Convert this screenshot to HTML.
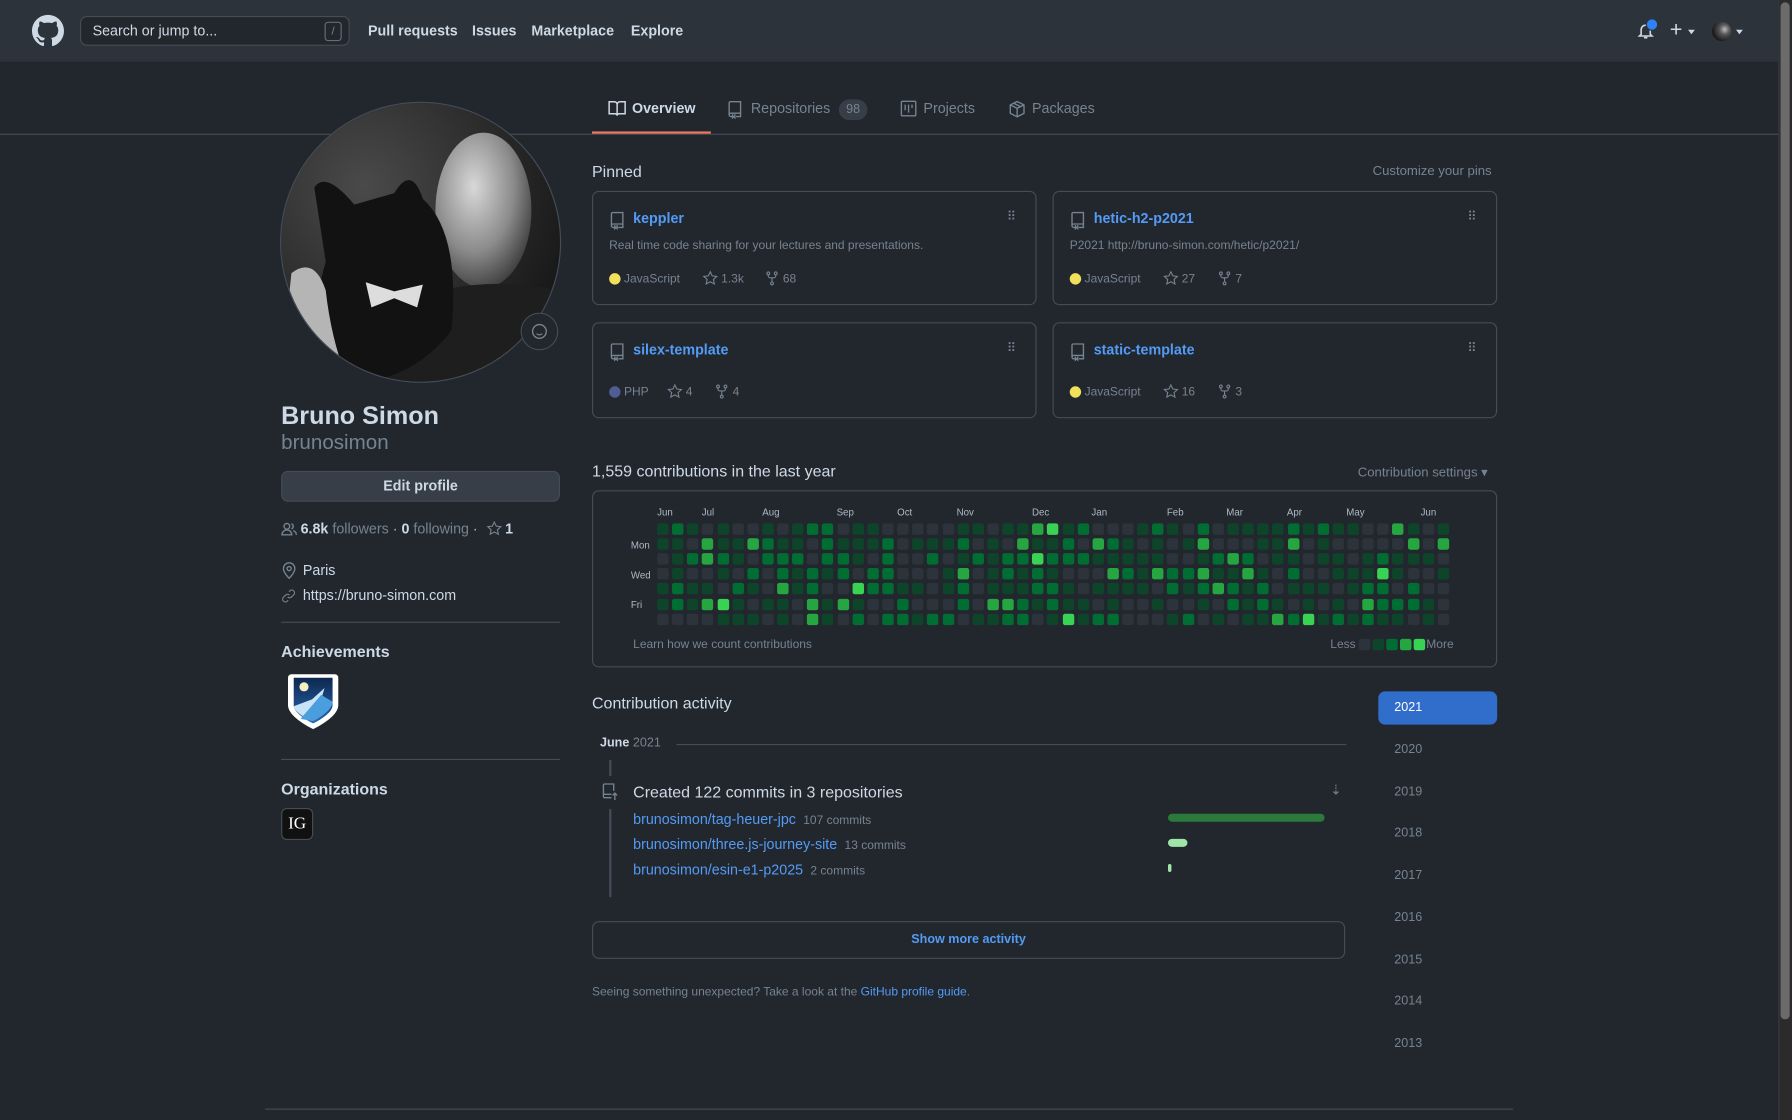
<!DOCTYPE html>
<html><head><meta charset="utf-8">
<style>
html,body{margin:0;padding:0;background:#22272e;width:1792px;height:1120px;overflow:hidden}
#w{position:absolute;left:0;top:0;width:1568px;height:980px;transform:scale(1.142857);transform-origin:0 0;font-family:"Liberation Sans",sans-serif;color:#adbac7;background:#22272e}
.a{position:absolute;white-space:nowrap}
.hdr{position:absolute;left:0;top:0;width:1556px;height:54px;background:#2d333b}
.nav{font-size:12.5px;font-weight:bold;color:#cdd9e5;top:20px}
.card{position:absolute;border:1px solid #444c56;border-radius:6px;box-sizing:border-box}
.link{color:#539bf5}
.muted{color:#768390}
.hr{position:absolute;height:1px;background:#444c56}
svg{position:absolute;overflow:visible}
.ico{fill:none;stroke:#768390;stroke-width:1.2}
</style></head><body><div id="w">
<div class="hdr"></div>
<svg style="left:28px;top:13px" width="28" height="28" viewBox="0 0 16 16"><path fill="#cdd9e5" d="M8 0C3.58 0 0 3.58 0 8c0 3.54 2.290 6.53 5.47 7.59.4.07.55-.17.55-.38 0-.19-.01-.82-.01-1.49-2.01.37-2.53-.49-2.690-.94-.09-.23-.48-.94-.82-1.130-.28-.15-.68-.52-.01-.53.63-.01 1.080.58 1.230.82.72 1.210 1.870.87 2.330.66.07-.52.28-.87.51-1.070-1.780-.2-3.640-.89-3.640-3.950 0-.87.31-1.590.82-2.150-.08-.2-.36-1.020.08-2.120 0 0 .67-.21 2.2.82.64-.18 1.320-.27 2-.27.68 0 1.360.09 2 .27 1.530-1.040 2.2-.82 2.2-.82.44 1.1.16 1.920.08 2.120.51.56.82 1.270.82 2.150 0 3.070-1.870 3.750-3.650 3.950.29.25.54.73.54 1.480 0 1.070-.01 1.930-.01 2.2 0 .21.15.46.55.38A8.013 8.013 0 0016 8c0-4.42-3.58-8-8-8z"/></svg>
<div class="a" style="left:70px;top:14px;width:236px;height:26px;border:1px solid #444c56;border-radius:6px;background:#22272e;box-sizing:border-box"></div>
<div class="a" style="left:81px;top:20px;font-size:12.5px;color:#cdd9e5">Search or jump to...</div>
<div class="a" style="left:284px;top:19px;width:15px;height:17px;border:1px solid #636e7b;border-radius:3px;box-sizing:border-box;font-size:10px;color:#768390;text-align:center;line-height:15px">/</div>
<div class="a nav" style="left:322px">Pull requests</div>
<div class="a nav" style="left:413px">Issues</div>
<div class="a nav" style="left:465px">Marketplace</div>
<div class="a nav" style="left:552px">Explore</div>
<svg style="left:1433px;top:19px" width="14" height="16" viewBox="0 0 14 16"><path d="M3 11V7a4 4 0 018 0v4l1.5 1.5h-11z M5.5 14h3" fill="none" stroke="#cdd9e5" stroke-width="1.4"/></svg>
<div class="a" style="left:1440px;top:16px;width:9px;height:9px;border-radius:50%;background:#2f81f7;border:1px solid #2d333b"></div>
<div class="a" style="left:1461px;top:16px;font-size:19px;color:#cdd9e5">+</div>
<div class="a" style="left:1477px;top:26px;border:3.5px solid transparent;border-top:4px solid #cdd9e5"></div>
<div class="a" style="left:1498px;top:19px;width:17px;height:17px;border-radius:50%;background:radial-gradient(circle at 65% 40%,#bbb 0,#555 30%,#1a1a1a 70%)"></div>
<div class="a" style="left:1519px;top:26px;border:3.5px solid transparent;border-top:4px solid #cdd9e5"></div>
<div class="a" style="left:1556px;top:0;width:12px;height:980px;background:#2b2b2b;border-left:1px solid #3a3a3a"></div>
<div class="a" style="left:1558px;top:2px;width:8px;height:890px;background:#6b6b6b;border-radius:4px"></div>
<div class="hr" style="left:0;top:117px;width:1556px"></div>
<svg style="left:532px;top:88px" width="16" height="14" viewBox="0 0 16 14"><path d="M1 1h4.5A2.5 2.5 0 018 3.5V13a2 2 0 00-2-1.5H1zM15 1h-4.5A2.5 2.5 0 008 3.5V13a2 2 0 012-1.5h5z" fill="none" stroke="#cdd9e5" stroke-width="1.3"/></svg>
<div class="a" style="left:553px;top:88px;font-size:12.5px;font-weight:bold;color:#cdd9e5">Overview</div>
<div class="a" style="left:518px;top:115px;width:104px;height:2px;background:#ec775c"></div>
<svg style="left:637px;top:88px" width="12" height="15" viewBox="0 0 12 15"><path class="ico" d="M2 1h9v10H2.5A1.5 1.5 0 001 12.5V2a1 1 0 011-1zM1 12.5A1.5 1.5 0 002.5 14H4M7 14h4v-3M4 12v3l1-1 1 1v-3"/></svg>
<div class="a muted" style="left:657px;top:88px;font-size:12.5px">Repositories</div>
<div class="a" style="left:734px;top:87px;width:25px;height:18px;border-radius:9px;background:#373e47;font-size:11px;text-align:center;line-height:18px;color:#768390">98</div>
<svg style="left:788px;top:88px" width="14" height="14" viewBox="0 0 14 14"><path class="ico" d="M1.5.7h11a.8.8 0 01.8.8v11a.8.8 0 01-.8.8h-11a.8.8 0 01-.8-.8v-11a.8.8 0 01.8-.8zM4 3.5v5M7 3.5v7M10 3.5v3"/></svg>
<div class="a muted" style="left:808px;top:88px;font-size:12.5px">Projects</div>
<svg style="left:883px;top:88px" width="14" height="15" viewBox="0 0 14 15"><path class="ico" d="M7 .8l6 3v7.4l-6 3-6-3V3.8zM1 3.8l6 3 6-3M7 6.8v7.4M4 2.3l6 3"/></svg>
<div class="a muted" style="left:903px;top:88px;font-size:12.5px">Packages</div>
<svg style="left:245px;top:89px" width="246" height="246" viewBox="0 0 246 246">
<defs><clipPath id="c"><circle cx="123" cy="123" r="122"/></clipPath>
<radialGradient id="bg" cx="30%" cy="30%" r="80%"><stop offset="0" stop-color="#4a4a4a"/><stop offset="1" stop-color="#161616"/></radialGradient>
<radialGradient id="hd" cx="40%" cy="35%" r="70%"><stop offset="0" stop-color="#d8d8d8"/><stop offset=".6" stop-color="#8a8a8a"/><stop offset="1" stop-color="#3a3a3a"/></radialGradient></defs>
<g clip-path="url(#c)">
<rect width="246" height="246" fill="url(#bg)"/>
<ellipse cx="178" cy="95" rx="42" ry="68" fill="url(#hd)"/>
<path d="M110 175 Q170 150 246 165 V246 H80z" fill="#1e1e1e"/>
<path d="M30 75 Q40 60 65 90 L100 80 Q115 55 125 85 Q158 115 150 200 Q120 240 70 246 L40 246 Q25 190 40 140z" fill="#121212"/>
<path d="M75 158 l25 8 l25 -6 l-5 20 l-20 -8 l-20 8z" fill="#ddd"/>
<path d="M10 150 Q30 135 40 165 Q45 210 60 246 H0z" fill="#b5b5b5"/>
</g>
<circle cx="123" cy="123" r="122.5" fill="none" stroke="#444c56" stroke-width="1"/>
<circle cx="227" cy="201" r="16" fill="#22272e" stroke="#444c56"/>
<circle cx="227" cy="201" r="6" fill="none" stroke="#768390" stroke-width="1.2"/>
<path d="M224.5 203q2.5 2 5 0" fill="none" stroke="#768390" stroke-width="1"/>
</svg>
<div class="a" style="left:246px;top:351px;font-size:22px;font-weight:bold;color:#cdd9e5">Bruno Simon</div>
<div class="a muted" style="left:246px;top:377px;font-size:18px">brunosimon</div>
<div class="a" style="left:246px;top:412px;width:244px;height:27px;border:1px solid #444c56;border-radius:6px;background:#373e47;box-sizing:border-box;text-align:center;line-height:25px;font-size:12.5px;font-weight:bold;color:#cdd9e5">Edit profile</div>
<svg style="left:246px;top:457px" width="14" height="12" viewBox="0 0 14 12"><path class="ico" d="M5 6a2.5 2.5 0 100-5 2.5 2.5 0 000 5zM.7 11a4.3 4.3 0 018.6 0zM9 1.3a2.4 2.4 0 010 4.5M10.5 7.3A4 4 0 0113.3 11"/></svg>
<div class="a" style="left:263px;top:456px;font-size:12.5px"><b style="color:#cdd9e5">6.8k</b> <span class="muted">followers</span> · <b style="color:#cdd9e5">0</b> <span class="muted">following</span> · </div>
<svg style="left:426px;top:456px" width="13" height="13" viewBox="0 0 16 16"><path class="ico" stroke-width="1.4" d="M8 1l2.1 4.4 4.9.6-3.6 3.3 1 4.8L8 11.7 3.6 14.1l1-4.8L1 6l4.9-.6z"/></svg>
<div class="a" style="left:442px;top:456px;font-size:12.5px;font-weight:bold;color:#cdd9e5">1</div>
<svg style="left:247px;top:492px" width="12" height="15" viewBox="0 0 12 15"><path class="ico" d="M6 14S1 9 1 5.5a5 5 0 0110 0C11 9 6 14 6 14z"/><circle class="ico" cx="6" cy="5.5" r="1.8"/></svg>
<div class="a" style="left:265px;top:492px;font-size:12.5px;color:#cdd9e5">Paris</div>
<svg style="left:246px;top:515px" width="13" height="13" viewBox="0 0 16 16"><path class="ico" stroke-width="1.5" d="M7 9a3 3 0 004.2 0l2.6-2.6a3 3 0 00-4.2-4.2L8.4 3.4M9 7a3 3 0 00-4.2 0L2.2 9.6a3 3 0 004.2 4.2l1.2-1.2"/></svg>
<div class="a" style="left:265px;top:514px;font-size:12.5px;color:#cdd9e5">https://bruno-simon.com</div>
<div class="hr" style="left:246px;top:544px;width:244px"></div>
<div class="a" style="left:246px;top:562px;font-size:14px;font-weight:bold;color:#cdd9e5">Achievements</div>
<svg style="left:251px;top:588px" width="46" height="52" viewBox="0 0 46 52">
<defs><linearGradient id="sk" x1="0" y1="0" x2="0" y2="1"><stop offset="0" stop-color="#0d2850"/><stop offset="1" stop-color="#2a66b0"/></linearGradient></defs>
<path d="M4 2h38a3 3 0 013 3v24c0 8-12 16-22 21C13 45 1 37 1 29V5a3 3 0 013-3z" fill="#fff"/>
<path d="M6 5h34v24c0 6-9 12-17 16C15 41 6 35 6 29z" fill="url(#sk)"/>
<path d="M6 30L22 24 33 14 30 24 23 43C15 40 7 35 6 30z" fill="#c8e3f7"/>
<path d="M12 41L30 20 40 26c0 6-9 13-17 17z" fill="#4b9ede"/>
<circle cx="15" cy="13" r="4" fill="#f4eec0"/>
</svg>
<div class="hr" style="left:246px;top:664px;width:244px"></div>
<div class="a" style="left:246px;top:682px;font-size:14px;font-weight:bold;color:#cdd9e5">Organizations</div>
<div class="a" style="left:246px;top:707px;width:28px;height:28px;background:#111;border:1px solid #444c56;border-radius:5px;box-sizing:border-box;font-family:'Liberation Serif',serif;color:#fff;font-size:15px;text-align:center;line-height:26px">IG</div>
<div class="a" style="left:518px;top:142px;font-size:14px;color:#cdd9e5">Pinned</div>
<div class="a muted" style="left:1201px;top:144px;font-size:11.5px">Customize your pins</div>
<div id="cards"></div>
<div class="a" style="left:518px;top:404px;font-size:14px;color:#cdd9e5">1,559 contributions in the last year</div>
<div class="a muted" style="left:1188px;top:406px;font-size:11.5px">Contribution settings ▾</div>
<div class="card" style="left:518px;top:429px;width:792px;height:155px"></div>
<div id="cal"></div>
<div class="a muted" style="left:554px;top:558px;font-size:10.5px">Learn how we count contributions</div>
<div class="a muted" style="left:1164px;top:558px;font-size:10.5px">Less</div>
<div class="a muted" style="left:1248px;top:558px;font-size:10.5px">More</div>
<div class="a" style="left:518px;top:607px;font-size:14px;color:#cdd9e5">Contribution activity</div>
<div class="a" style="left:1206px;top:605px;width:104px;height:29px;background:#316dca;border-radius:6px;box-sizing:border-box;padding-left:14px;line-height:29px;font-size:11px;color:#fff">2021</div>
<div id="yrs"></div>
<div class="a" style="left:525px;top:644px;font-size:11px"><b style="color:#cdd9e5">June</b> <span class="muted">2021</span></div>
<div class="hr" style="left:592px;top:651px;width:586px"></div>
<div class="a" style="left:533px;top:665px;width:2px;height:14px;background:#444c56"></div>
<div class="a" style="left:533px;top:708px;width:2px;height:77px;background:#444c56"></div>
<svg style="left:527px;top:685px" width="14" height="16" viewBox="0 0 14 16"><path class="ico" d="M8 13H2a1 1 0 01-1-1V2a1 1 0 011-1h8v6M1 10h7M11 15V9M9 11l2-2 2 2"/></svg>
<div class="a" style="left:554px;top:685px;font-size:14px;color:#cdd9e5">Created 122 commits in 3 repositories</div>
<div class="a muted" style="left:1164px;top:684px;font-size:12px">⇣</div>
<div class="a" style="left:554px;top:710px;font-size:12.5px"><span class="link">brunosimon/tag-heuer-jpc</span> <span class="muted" style="font-size:10.5px">&nbsp;107 commits</span></div>
<div class="a" style="left:554px;top:732px;font-size:12.5px"><span class="link">brunosimon/three.js-journey-site</span> <span class="muted" style="font-size:10.5px">&nbsp;13 commits</span></div>
<div class="a" style="left:554px;top:754px;font-size:12.5px"><span class="link">brunosimon/esin-e1-p2025</span> <span class="muted" style="font-size:10.5px">&nbsp;2 commits</span></div>
<div class="a" style="left:1022px;top:712px;width:137px;height:7px;border-radius:4px;background:#2b7a3b"></div>
<div class="a" style="left:1022px;top:734px;width:17px;height:7px;border-radius:4px;background:#a0e5a8"></div>
<div class="a" style="left:1022px;top:756px;width:3px;height:7px;border-radius:2px;background:#a0e5a8"></div>
<div class="a" style="left:518px;top:806px;width:659px;height:33px;border:1px solid #444c56;border-radius:6px;box-sizing:border-box;text-align:center;line-height:31px;font-size:11px;font-weight:bold;color:#539bf5">Show more activity</div>
<div class="a muted" style="left:518px;top:862px;font-size:10.5px">Seeing something unexpected? Take a look at the <span class="link">GitHub profile guide</span>.</div>
<div class="hr" style="left:232px;top:970px;width:1092px"></div>
</div>
<script>
var cards=[[518,167,100,'keppler','Real time code sharing for your lectures and presentations.','#f1e05a','JavaScript','1.3k','68'],
[921,167,100,'hetic-h2-p2021','P2021 http://bruno-simon.com/hetic/p2021/','#f1e05a','JavaScript','27','7'],
[518,282,84,'silex-template','','#4F5D95','PHP','4','4'],
[921,282,84,'static-template','','#f1e05a','JavaScript','16','3']];
var h='';
var star='<path class="ico" stroke-width="1.4" d="M8 1l2.1 4.4 4.9.6-3.6 3.3 1 4.8L8 11.7 3.6 14.1l1-4.8L1 6l4.9-.6z"/>';
var fork='<path class="ico" stroke-width="1.4" d="M4 4v1.5a2 2 0 002 2h4a2 2 0 002-2V4M8 7.5V12"/><circle class="ico" stroke-width="1.4" cx="4" cy="2.7" r="1.5"/><circle class="ico" stroke-width="1.4" cx="12" cy="2.7" r="1.5"/><circle class="ico" stroke-width="1.4" cx="8" cy="13.5" r="1.5"/>';
cards.forEach(function(c){var x=c[0],y=c[1];
h+='<div class="card" style="left:'+x+'px;top:'+y+'px;width:389px;height:'+c[2]+'px"></div>';
h+='<svg style="left:'+(x+16)+'px;top:'+(y+18)+'px" width="12" height="15" viewBox="0 0 12 15"><path class="ico" d="M2 1h9v10H2.5A1.5 1.5 0 001 12.5V2a1 1 0 011-1zM1 12.5A1.5 1.5 0 002.5 14H4M7 14h4v-3M4 12v3l1-1 1 1v-3"/></svg>';
h+='<div class="a link" style="left:'+(x+36)+'px;top:'+(y+17)+'px;font-size:12.5px;font-weight:bold">'+c[3]+'</div>';
h+='<div class="a muted" style="left:'+(x+363)+'px;top:'+(y+16)+'px;font-size:11px;letter-spacing:-1px">⠿</div>';
if(c[4])h+='<div class="a muted" style="left:'+(x+15)+'px;top:'+(y+42)+'px;font-size:10.5px">'+c[4]+'</div>';
var fy=y+c[2]-29;
h+='<div class="a" style="left:'+(x+15)+'px;top:'+(fy+1)+'px;width:10px;height:10px;border-radius:50%;background:'+c[5]+'"></div>';
h+='<div class="a muted" style="left:'+(x+28)+'px;top:'+fy+'px;font-size:10.5px">'+c[6]+'</div>';
var sx=x+(c[6]=='PHP'?66:97);
h+='<svg style="left:'+sx+'px;top:'+(fy-1)+'px" width="13" height="13" viewBox="0 0 16 16">'+star+'</svg>';
h+='<div class="a muted" style="left:'+(sx+16)+'px;top:'+fy+'px;font-size:10.5px">'+c[7]+'</div>';
var fx=sx+(c[7].length>2?54:c[7].length>1?47:41);
h+='<svg style="left:'+fx+'px;top:'+(fy-1)+'px" width="13" height="13" viewBox="0 0 16 16">'+fork+'</svg>';
h+='<div class="a muted" style="left:'+(fx+16)+'px;top:'+fy+'px;font-size:10.5px">'+c[8]+'</div>';
});
document.getElementById('cards').innerHTML=h;
var cols=['#2d333b','#0e4429','#006d32','#26a641','#39d353'];
var g='';var s=7;function r(){s=(s*9301+49297)%233280;return s/233280;}
var months=[['Jun',575],['Jul',614],['Aug',667],['Sep',732],['Oct',785],['Nov',837],['Dec',903],['Jan',955],['Feb',1021],['Mar',1073],['Apr',1126],['May',1178],['Jun',1243]];
months.forEach(function(m){g+='<div class="a" style="left:'+m[1]+'px;top:443px;font-size:8.5px;color:#adbac7">'+m[0]+'</div>';});
[['Mon',477],['Wed',503],['Fri',529]].forEach(function(d){g+='<div class="a" style="left:552px;top:'+(d[1]-5)+'px;font-size:8.5px;color:#adbac7">'+d[0]+'</div>';});
for(var c=0;c<53;c++)for(var w=0;w<7;w++){var v=r();var l=v<0.28?0:v<0.62?1:v<0.9?2:v<0.97?3:4;
g+='<div class="a" style="left:'+(575+c*13.13).toFixed(1)+'px;top:'+(458+w*13.1).toFixed(1)+'px;width:10px;height:10px;border-radius:2px;background:'+cols[l]+'"></div>';}
for(var i=0;i<5;i++)g+='<div class="a" style="left:'+(1189+i*12)+'px;top:559px;width:10px;height:10px;border-radius:2px;background:'+cols[i]+'"></div>';
document.getElementById('cal').innerHTML=g;
var y='';[2020,2019,2018,2017,2016,2015,2014,2013].forEach(function(t,i){y+='<div class="a muted" style="left:1220px;top:'+(650+i*36.7).toFixed(1)+'px;font-size:11px">'+t+'</div>';});
document.getElementById('yrs').innerHTML=y;
</script>
</body></html>
